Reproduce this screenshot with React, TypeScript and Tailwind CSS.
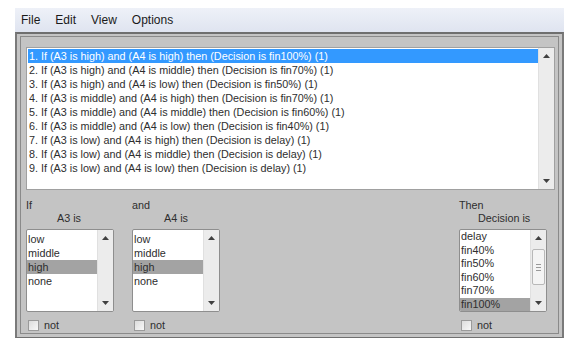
import React from 'react';

const rules = [
  '1. If (A3 is high) and (A4 is high) then (Decision is fin100%) (1)',
  '2. If (A3 is high) and (A4 is middle) then (Decision is fin70%) (1)',
  '3. If (A3 is high) and (A4 is low) then (Decision is fin50%) (1)',
  '4. If (A3 is middle) and (A4 is high) then (Decision is fin70%) (1)',
  '5. If (A3 is middle) and (A4 is middle) then (Decision is fin60%) (1)',
  '6. If (A3 is middle) and (A4 is low) then (Decision is fin40%) (1)',
  '7. If (A3 is low) and (A4 is high) then (Decision is delay) (1)',
  '8. If (A3 is low) and (A4 is middle) then (Decision is delay) (1)',
  '9. If (A3 is low) and (A4 is low) then (Decision is delay) (1)',
];

const ArrowUp = () => (
  <svg width="7" height="4" viewBox="0 0 7 4"><path d="M0 4 L3.5 0 L7 4 Z" fill="#404040" /></svg>
);
const ArrowDown = () => (
  <svg width="7" height="4" viewBox="0 0 7 4"><path d="M0 0 L3.5 4 L7 0 Z" fill="#404040" /></svg>
);

const ScrollBar: React.FC<{ thumb?: boolean }> = ({ thumb }) => (
  <div className="w-[16px] bg-[#ececec] border-l border-[#e0e0e0] flex flex-col items-center justify-between py-[6px] relative">
    <ArrowUp />
    {thumb && (
      <div className="absolute left-[1px] top-[19px] w-[13px] h-[36px] bg-[#f4f4f4] border border-[#b8b8b8] rounded-[2px] flex items-center justify-center">
        <div className="w-[5px] h-[7px] border-y border-[#999] flex flex-col justify-center">
          <div className="h-px bg-[#999]" />
        </div>
      </div>
    )}
    <ArrowDown />
  </div>
);

const PickList: React.FC<{ items: string[]; selected: string; dense?: boolean }> = ({ items, selected, dense }) => (
  <div className="w-[88px] h-[83px] bg-white border border-[#8e8e8e] rounded-[2px] flex overflow-hidden">
    <div className={`flex-1 ${dense ? 'pt-0' : 'pt-[2px]'}`}>
      {items.map((it) => (
        <div
          key={it}
          className={`${dense ? 'h-[13.5px] leading-[13.5px]' : 'h-[14px] leading-[14px]'} pl-[1px] ${it === selected ? 'bg-[#a3a3a3]' : ''}`}
        >
          {it}
        </div>
      ))}
    </div>
    <ScrollBar thumb={dense} />
  </div>
);

const NotBox = () => (
  <div className="flex items-center gap-[5px] mt-[5px] ml-[2px]">
    <div className="w-[11px] h-[11px] border border-[#9a9a9a] bg-gradient-to-br from-[#dcdcdc] to-[#f8f8f8]" />
    <span>not</span>
  </div>
);

export default function App() {
  return (
    <div
      className="w-[579px] h-[348px] bg-white overflow-hidden text-[#2e2e2e] text-[10.8px]"
      style={{ fontFamily: '"Liberation Sans", Arial, sans-serif' }}
    >
      <div className="ml-[15px] w-[549px] pt-[8px]">
        {/* menu bar */}
        <div className="h-[24px] bg-gradient-to-b from-[#eef1f8] to-[#dfe4f0] flex items-center gap-[15px] pl-[6px] text-[12px] text-[#1a1a1a]">
          <span>File</span>
          <span>Edit</span>
          <span>View</span>
          <span>Options</span>
        </div>
        {/* window body */}
        <div className="h-[306px] bg-[#c4c4c4] border-t-2 border-[#6f6f6f] border-x-2 border-b border-x-[#7a7a7a] p-[3px] pt-[2px]">
          <div className="h-full border border-[#8a8a8a] pl-[5px] pr-[3px] pt-[10px]">
            {/* rules list */}
            <div className="h-[143px] bg-white border border-[#a0a0a0] flex">
              <div className="flex-1 pt-[1px] pl-[1px]">
                {rules.map((r, i) => (
                  <div
                    key={r}
                    className={`h-[14px] leading-[14px] whitespace-nowrap pl-[1px] ${i === 0 ? 'bg-[#3399ff] text-white' : ''}`}
                  >
                    {r}
                  </div>
                ))}
              </div>
              <ScrollBar />
            </div>
            {/* pickers */}
            <div className="flex mt-[9px]">
              <div className="w-[106px]">
                <div className="leading-[13px]">If</div>
                <div className="leading-[13px] pl-[31px] mb-[4px]">A3 is</div>
                <PickList items={['low', 'middle', 'high', 'none']} selected="high" />
                <NotBox />
              </div>
              <div className="w-[106px]">
                <div className="leading-[13px]">and</div>
                <div className="leading-[13px] pl-[32px] mb-[4px]">A4 is</div>
                <PickList items={['low', 'middle', 'high', 'none']} selected="high" />
                <NotBox />
              </div>
              <div className="flex-1" />
              <div className="w-[96px]">
                <div className="leading-[13px]">Then</div>
                <div className="leading-[13px] pl-[19px] mb-[4px]">Decision is</div>
                <PickList items={['delay', 'fin40%', 'fin50%', 'fin60%', 'fin70%', 'fin100%']} selected="fin100%" dense />
                <NotBox />
              </div>
            </div>
          </div>
        </div>
      </div>
    </div>
  );
}
